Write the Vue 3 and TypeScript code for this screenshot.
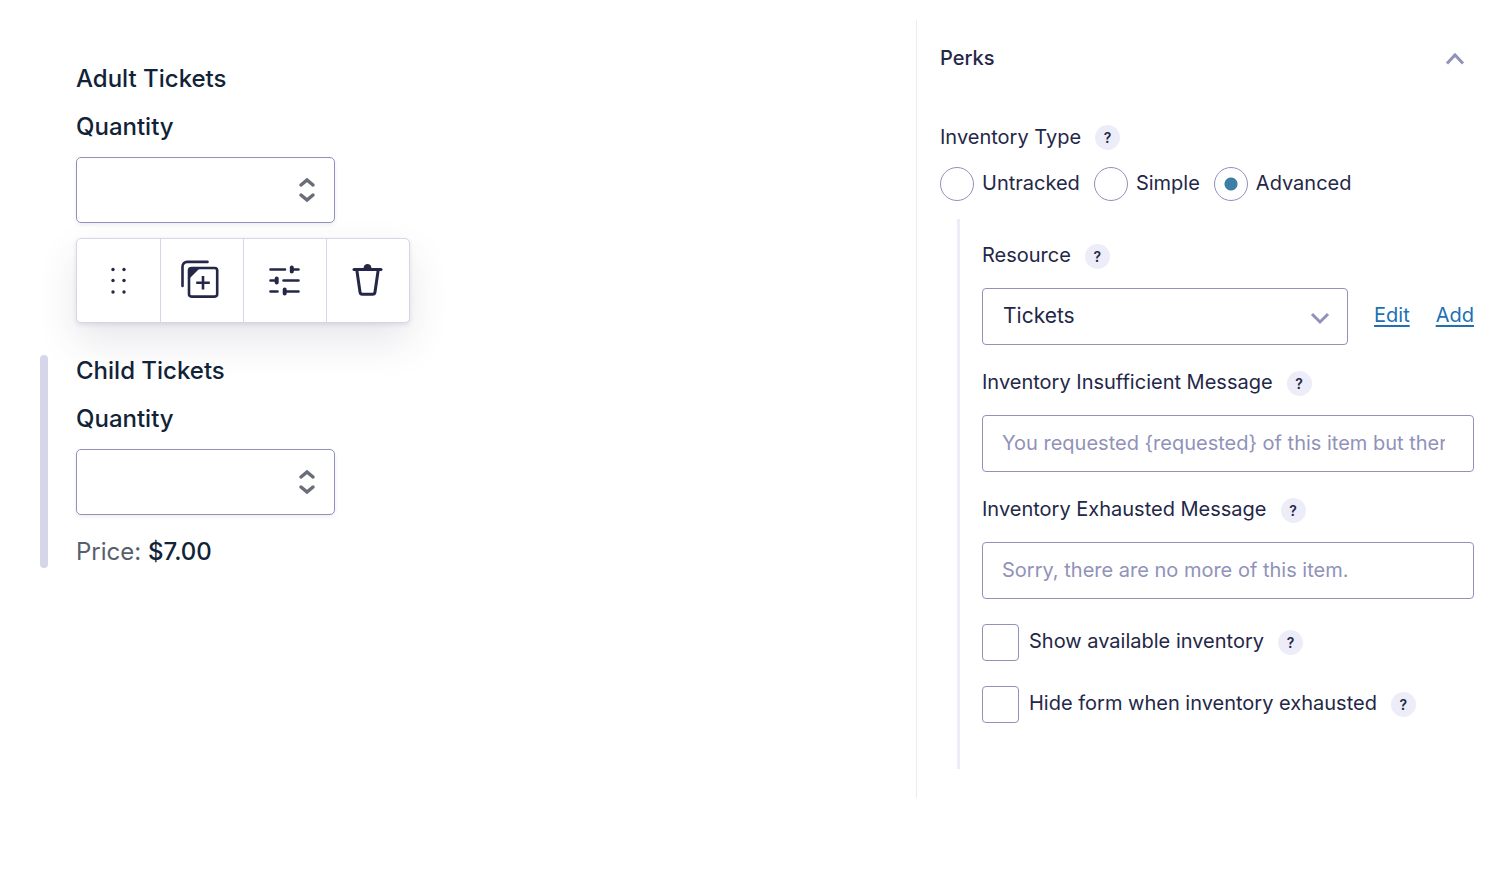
<script setup lang="ts">
import { ref } from 'vue'

const adultQuantity = ref<string>('')
const childQuantity = ref<string>('')
const inventoryTypes: string[] = ['Untracked', 'Simple', 'Advanced']
const inventoryType = ref<string>('Advanced')
const resource = ref<string>('Tickets')
const messages = [
  { id: 'insufficient', label: 'Inventory Insufficient Message', placeholder: 'You requested {requested} of this item but there are only {available} left.' },
  { id: 'exhausted', label: 'Inventory Exhausted Message', placeholder: 'Sorry, there are no more of this item.' },
]
const toggles = [
  { id: 'show', label: 'Show available inventory' },
  { id: 'hide', label: 'Hide form when inventory exhausted' },
]
</script>

<template>
  <div class="editor">
    <main class="canvas">
      <section class="field">
        <h2 class="title">Adult Tickets</h2>
        <label class="title" for="adult">Quantity</label>
        <div class="number">
          <input id="adult" v-model="adultQuantity" type="number" />
          <svg class="spin" viewBox="0 0 18 28" aria-hidden="true"><path d="M3 9 9 4l6 5M3 19 9 24l6-5" /></svg>
        </div>
      </section>

      <div class="toolbar" role="toolbar" aria-label="Field actions">
        <button type="button" aria-label="Move">
          <svg viewBox="0 0 40 40" class="solid">
            <circle cx="14" cy="8.500" r="1.700" /><circle cx="25" cy="8.500" r="1.700" />
            <circle cx="14" cy="19.500" r="1.700" /><circle cx="25" cy="19.500" r="1.700" />
            <circle cx="14" cy="31" r="1.700" /><circle cx="25" cy="31" r="1.700" />
          </svg>
        </button>
        <button type="button" aria-label="Duplicate">
          <svg viewBox="0 0 40 40" class="line">
            <path d="M.500 25V5.500A4.600 4.600 0 0 1 5.100.900H25.500" stroke-linecap="round" />
            <rect x="7" y="7" width="28.200" height="28.600" rx="2.500" />
            <path class="fill" d="M7.500 7h10.500L7.500 17.500z" />
            <path d="M21 15v13.500M14.200 21.700h13.600" />
          </svg>
        </button>
        <button type="button" aria-label="Settings">
          <svg viewBox="0 0 40 40" class="line">
            <path d="M5.500 8.500H20M28 8.500h5.500M5.500 19.500h6M18.500 19.500h15M5.500 30.500h7M20.500 30.500h13" stroke-linecap="round" />
            <path d="M26.800 6.500v4M11.700 17.500v4M19.700 28.500v4" class="knob" />
          </svg>
        </button>
        <button type="button" aria-label="Delete">
          <svg viewBox="0 0 40 40" class="line bin">
            <path d="M6 8.400h27" stroke-linecap="round" />
            <path d="M8.800 9l3.200 22a2.500 2.500 0 0 0 2.500 2.200h10a2.500 2.500 0 0 0 2.500-2.200l3.200-22" />
            <path class="fill" d="M15.500 7.500a4 4.500 0 0 1 8 0z" />
          </svg>
        </button>
      </div>

      <section class="field selected">
        <h2 class="title">Child Tickets</h2>
        <label class="title" for="child">Quantity</label>
        <div class="number">
          <input id="child" v-model="childQuantity" type="number" />
          <svg class="spin" viewBox="0 0 18 28" aria-hidden="true"><path d="M3 9 9 4l6 5M3 19 9 24l6-5" /></svg>
        </div>
        <p class="price">Price: <strong>$7.00</strong></p>
      </section>
    </main>

    <aside class="panel">
      <header class="panel-head">
        <h2>Perks</h2>
        <button type="button" aria-label="Collapse Perks">
          <svg viewBox="0 0 20 14"><path d="M2 12.500 10 4l8 8.500" /></svg>
        </button>
      </header>

      <fieldset class="types">
        <legend class="caption"><span>Inventory Type</span><button type="button" class="help" aria-label="Inventory type help">?</button></legend>
        <div class="radios">
          <label v-for="t in inventoryTypes" :key="t">
            <input v-model="inventoryType" type="radio" name="inventory-type" :value="t" /><span>{{ t }}</span>
          </label>
        </div>
      </fieldset>

      <div class="nested">
        <div class="caption">
          <label for="resource">Resource</label>
          <button type="button" class="help" aria-label="Resource help">?</button>
        </div>
        <div class="resource">
          <div class="select">
            <select id="resource" v-model="resource"><option>Tickets</option></select>
            <svg viewBox="0 0 20 14" aria-hidden="true"><path d="m2 3 8 8 8-8" /></svg>
          </div>
          <a href="#edit">Edit</a>
          <a href="#add">Add</a>
        </div>

        <template v-for="m in messages" :key="m.id">
          <div class="caption">
            <label :for="m.id">{{ m.label }}</label>
            <button type="button" class="help" :aria-label="m.label + ' help'">?</button>
          </div>
          <input :id="m.id" class="text" type="text" :placeholder="m.placeholder" />
        </template>

        <div v-for="t in toggles" :key="t.id" class="toggle">
          <input :id="t.id" type="checkbox" />
          <label :for="t.id">{{ t.label }}</label>
          <button type="button" class="help" :aria-label="t.label + ' help'">?</button>
        </div>
      </div>
    </aside>
  </div>
</template>

<style>
body {
  margin: 0;
  background: #fff;
}
</style>

<style scoped>
.editor {
  display: grid;
  grid-template-columns: minmax(0, 916fr) minmax(0, 578fr);
  align-items: start;
  padding-top: 20px;
  font-family: Inter, "Liberation Sans", sans-serif;
  font-size: 20px;
  line-height: 32px;
  color: #242748;
}
*, *::before {
  box-sizing: border-box;
}
button, input, select {
  margin: 0;
  font: inherit;
  color: inherit;
}
button {
  padding: 0;
  border: 0;
  background: none;
  cursor: pointer;
}
svg {
  display: block;
  fill: none;
}
h2, p {
  margin: 0;
}

.canvas {
  padding: 43px 40px 0;
}
.field {
  display: flex;
  flex-direction: column;
  align-items: flex-start;
  padding-left: 36px;
}
.title {
  font-size: 24px;
  font-weight: 500;
  line-height: 32px;
  color: #112337;
}
.title + .title {
  margin-top: 16px;
}
.number {
  position: relative;
  width: 259px;
  margin-top: 14px;
}
.number input {
  display: block;
  width: 100%;
  height: 66px;
  padding: 0 56px 0 20px;
  border: 1px solid #9092b9;
  border-radius: 5px;
  background: #fff;
  box-shadow: 0 2px 4px rgba(20, 20, 80, 0.07);
  appearance: textfield;
}
.number input::-webkit-inner-spin-button {
  appearance: none;
}
.spin {
  position: absolute;
  top: 19px;
  right: 19px;
  width: 18px;
  height: 28px;
  stroke: #686e77;
  stroke-width: 3.500;
  stroke-linecap: round;
  pointer-events: none;
}
.toolbar {
  display: grid;
  grid-template-columns: repeat(4, 1fr);
  width: 334px;
  height: 85px;
  margin: 15px 0 0 36px;
  border: 1px solid #d5d7e9;
  border-radius: 5px;
  background: #fff;
  box-shadow: 0 2px 4px rgba(58, 58, 120, 0.12), 0 18px 40px rgba(58, 58, 87, 0.12);
}
.toolbar button {
  display: grid;
  place-items: center;
}
.toolbar button + button {
  border-left: 1px solid #d5d7e9;
}
.toolbar svg {
  width: 40px;
  height: 40px;
  overflow: visible;
}
.solid {
  fill: #242748;
}
.line {
  stroke: #242748;
  stroke-width: 2.600;
}
.bin {
  stroke-width: 3;
}
.fill {
  fill: #242748;
  stroke: none;
}
.knob {
  stroke-width: 4;
  stroke-linecap: round;
}
.selected {
  position: relative;
  margin-top: 32px;
}
.selected::before {
  content: "";
  position: absolute;
  top: 0;
  bottom: 0;
  left: 0;
  width: 8px;
  border-radius: 4px;
  background: #d5d7e9;
}
.price {
  margin-top: 21px;
  font-size: 24px;
  color: #585e6a;
}
.price strong {
  font-weight: 500;
  color: #112337;
}

.panel {
  min-height: 778px;
  padding: 22px 20px 29px 23px;
  border-left: 1px solid #ebebf5;
}
.panel-head {
  display: flex;
  align-items: center;
  justify-content: space-between;
  padding-right: 9px;
}
.panel-head h2 {
  font-size: 20px;
  font-weight: 500;
}
.panel-head svg {
  width: 20px;
  height: 14px;
  stroke: #9092b9;
  stroke-width: 3;
}
.caption {
  display: flex;
  align-items: center;
  gap: 14px;
}
.caption label, .radios span, .toggle label {
  padding-bottom: 2px;
  line-height: 30px;
}
.help {
  flex: none;
  width: 25px;
  height: 25px;
  border-radius: 50%;
  background: #ecedf8;
  font-size: 14px;
  font-weight: 600;
  line-height: 25px;
  text-align: center;
}
.types {
  min-width: 0;
  margin: 47px 0 0;
  padding: 0;
  border: 0;
}
.types legend {
  padding: 0;
}
.radios {
  display: flex;
  gap: 14px;
  margin-top: 14px;
}
.radios label {
  display: flex;
  align-items: center;
  gap: 8px;
}
.radios input, .toggle input {
  flex: none;
  appearance: none;
  border: 1px solid #9092b9;
  background: #fff;
}
.radios input {
  width: 34px;
  height: 34px;
  border-radius: 50%;
}
.radios input:checked {
  background: radial-gradient(circle, #3e7da6 6px, #fff 7px);
}
.nested {
  margin: 18px 0 0 17px;
  padding: 21px 0 46px 22px;
  border-left: 3px solid #ecedf8;
}
.resource {
  display: flex;
  align-items: center;
  gap: 26px;
  margin: 16px 0 22px;
}
.select {
  position: relative;
  flex: 1;
  min-width: 0;
}
.select select {
  display: block;
  width: 100%;
  height: 57px;
  padding: 0 56px 2px 20px;
  appearance: none;
  border: 1px solid #9092b9;
  border-radius: 4px;
  background: #fff;
  font-size: 21px;
}
.select svg {
  position: absolute;
  top: 23px;
  right: 18px;
  width: 20px;
  height: 14px;
  stroke: #9092b9;
  stroke-width: 3;
  pointer-events: none;
}
a {
  padding-bottom: 4px;
  line-height: 30px;
  color: #216fb4;
  text-decoration-thickness: 2px;
  text-underline-offset: 3px;
}
.text {
  display: block;
  width: 100%;
  height: 57px;
  margin: 16px 0 22px;
  padding: 0 28px 2px 19px;
  border: 1px solid #9092b9;
  border-radius: 4px;
  background: #fff;
}
.text::placeholder {
  color: #9092b9;
  opacity: 1;
}
.toggle {
  display: flex;
  align-items: center;
  margin-top: 25px;
}
.toggle input {
  width: 37px;
  height: 37px;
  margin-right: 10px;
  border-radius: 4px;
}
.toggle label {
  padding-bottom: 4px;
}
.toggle .help {
  margin-left: 14px;
}
</style>
